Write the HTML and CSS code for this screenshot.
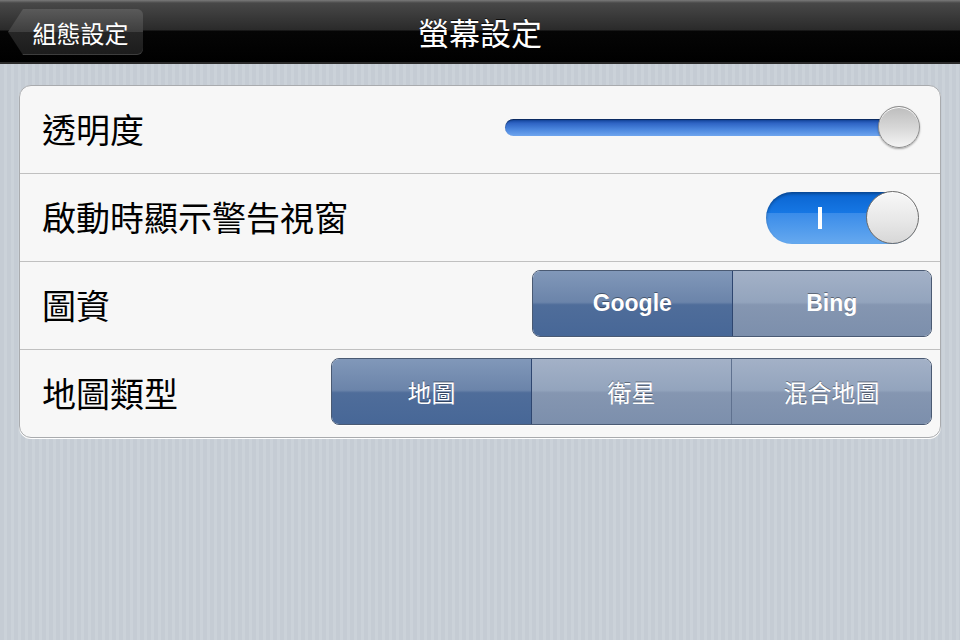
FILE: index.html
```html
<!DOCTYPE html>
<html lang="zh-Hant">
<head>
    <meta charset="UTF-8">
    <meta name="viewport" content="width=device-width, initial-scale=1.0">
    <title>螢幕設定</title>
    <link rel="stylesheet" href="styles.css">
</head>
<body>
    <div class="navbar">
        <div class="back-button">組態設定</div>
        <div class="nav-title">螢幕設定</div>
    </div>
    <div class="content">
        <div class="group">
            <div class="row">
                <div class="label">透明度</div>
                <div class="slider">
                    <div class="slider-track"></div>
                    <div class="slider-thumb"></div>
                </div>
            </div>
            <div class="row">
                <div class="label">啟動時顯示警告視窗</div>
                <div class="switch">
                    <div class="switch-mark"></div>
                    <div class="switch-knob"></div>
                </div>
            </div>
            <div class="row">
                <div class="label">圖資</div>
                <div class="segmented latin">
                    <div class="segment selected">Google</div>
                    <div class="segment">Bing</div>
                </div>
            </div>
            <div class="row">
                <div class="label">地圖類型</div>
                <div class="segmented wide">
                    <div class="segment selected">地圖</div>
                    <div class="segment">衛星</div>
                    <div class="segment">混合地圖</div>
                </div>
            </div>
        </div>
    </div>
</body>
</html>
```

FILE: styles.css
```css
html, body {
    margin: 0;
    height: 100%;
}
body {
    font-family: "Liberation Sans", "Noto Sans CJK TC", sans-serif;
    background-color: #c5ccd4;
    background-image: repeating-linear-gradient(to right, #c5ccd4 0, #c5ccd4 4px, #cbd2d9 4px, #cbd2d9 7px);
    overflow: hidden;
}
.navbar {
    position: relative;
    height: 62px;
    border-bottom: 2px solid #2a2a2a;
    background: linear-gradient(to bottom, #7a7a7a 0, #484848 3px, #2a2a2a 30px, #050505 31px, #000 62px);
    display: flex;
    align-items: center;
    justify-content: center;
}
.nav-title {
    color: #fff;
    font-size: 31px;
    font-family: "Noto Sans CJK TC", sans-serif;
    text-shadow: 0 -1px 0 rgba(0, 0, 0, 0.8);
}
.back-button {
    position: absolute;
    left: 8px;
    top: 9px;
    height: 46px;
    width: 125px;
    padding-left: 10px;
    display: flex;
    align-items: center;
    justify-content: center;
    color: #fff;
    font-size: 24px;
    font-family: "Noto Sans CJK TC", sans-serif;
    background: linear-gradient(to bottom, #5a5a5a 0, #3e3e3e 50%, #262626 50%, #1c1c1c 100%);
    clip-path: polygon(15px 0, 100% 0, 100% 100%, 15px 100%, 0 50%);
    border-radius: 0 6px 6px 0;
    box-shadow: inset 0 -1px 0 rgba(255, 255, 255, 0.15);
}
.content {
    padding: 21px 19px;
}
.group {
    background: #f7f7f7;
    border: 1px solid #a9abae;
    border-radius: 12px;
    box-shadow: 0 1px 0 #fff;
    overflow: hidden;
}
.row {
    height: 87px;
    display: flex;
    align-items: center;
    justify-content: space-between;
    padding: 0 8px 0 22px;
    border-top: 1px solid #c0c0c0;
}
.row:first-child {
    border-top: none;
}
.label {
    font-family: "Noto Sans CJK TC", sans-serif;
    font-size: 34px;
    color: #000;
    margin-bottom: 3px;
}
.slider {
    position: relative;
    width: 415px;
    height: 44px;
    margin: 0 12px 4px 0;
    display: flex;
    align-items: center;
}
.slider-track {
    width: 393px;
    height: 17px;
    border-radius: 9px;
    background: linear-gradient(to bottom, #0d3e94 0, #2f64c4 25%, #4a85dd 60%, #6fa5ee 100%);
    box-shadow: inset 0 1px 1px rgba(0, 0, 0, 0.4);
}
.slider-thumb {
    position: absolute;
    right: 0;
    top: 0;
    width: 40px;
    height: 40px;
    border-radius: 50%;
    border: 1px solid #8d8d8d;
    background: linear-gradient(to bottom, #bdbdbd 0, #d9d9d9 55%, #f4f4f4 100%);
    box-shadow: 0 1px 2px rgba(0, 0, 0, 0.35), inset 0 1px 0 #fff;
}
.switch {
    position: relative;
    width: 152px;
    height: 52px;
    margin-right: 14px;
    border-radius: 27px;
    background: linear-gradient(to bottom, #0a64d0 0, #1677e4 40%, #3a8ce9 41%, #66a9ef 100%);
    box-shadow: inset 0 2px 3px rgba(0, 0, 0, 0.3);
}
.switch-mark {
    position: absolute;
    left: 52px;
    top: 15px;
    width: 4px;
    height: 22px;
    background: #fff;
}
.switch-knob {
    position: absolute;
    right: -1px;
    top: -1px;
    width: 51px;
    height: 51px;
    border-radius: 50%;
    border: 1px solid #6b6b6b;
    background: linear-gradient(to bottom, #f8f8f8 0, #e6e6e6 60%, #d7d7d7 100%);
    box-shadow: inset 0 1px 0 #fff;
}
.segmented {
    display: flex;
    height: 65px;
    margin-bottom: 4px;
    border: 1px solid #4a5a73;
    border-radius: 8px;
    overflow: hidden;
    box-shadow: 0 1px 0 rgba(255, 255, 255, 0.8);
}
.segmented.latin {
    width: 398px;
}
.segmented.wide {
    width: 599px;
}
.segment {
    flex: 1;
    display: flex;
    align-items: center;
    justify-content: center;
    color: #fff;
    font-size: 24px;
    font-family: "Noto Sans CJK TC", sans-serif;
    text-shadow: 0 -1px 0 rgba(0, 0, 0, 0.4);
    background: linear-gradient(to bottom, #a3b1c7 0, #93a4bd 48%, #8596b1 52%, #7c8fac 100%);
    border-left: 1px solid #5f718f;
}
.segment:first-child {
    border-left: none;
}
.segment.selected {
    background: linear-gradient(to bottom, #8198b9 0, #6b84aa 48%, #4f6d9a 52%, #476797 100%);
    border-right: 1px solid #2e4670;
}
.segment.selected + .segment {
    border-left: none;
}
.latin .segment {
    font-family: "Liberation Sans", sans-serif;
    font-weight: bold;
    font-size: 23px;
}
```
